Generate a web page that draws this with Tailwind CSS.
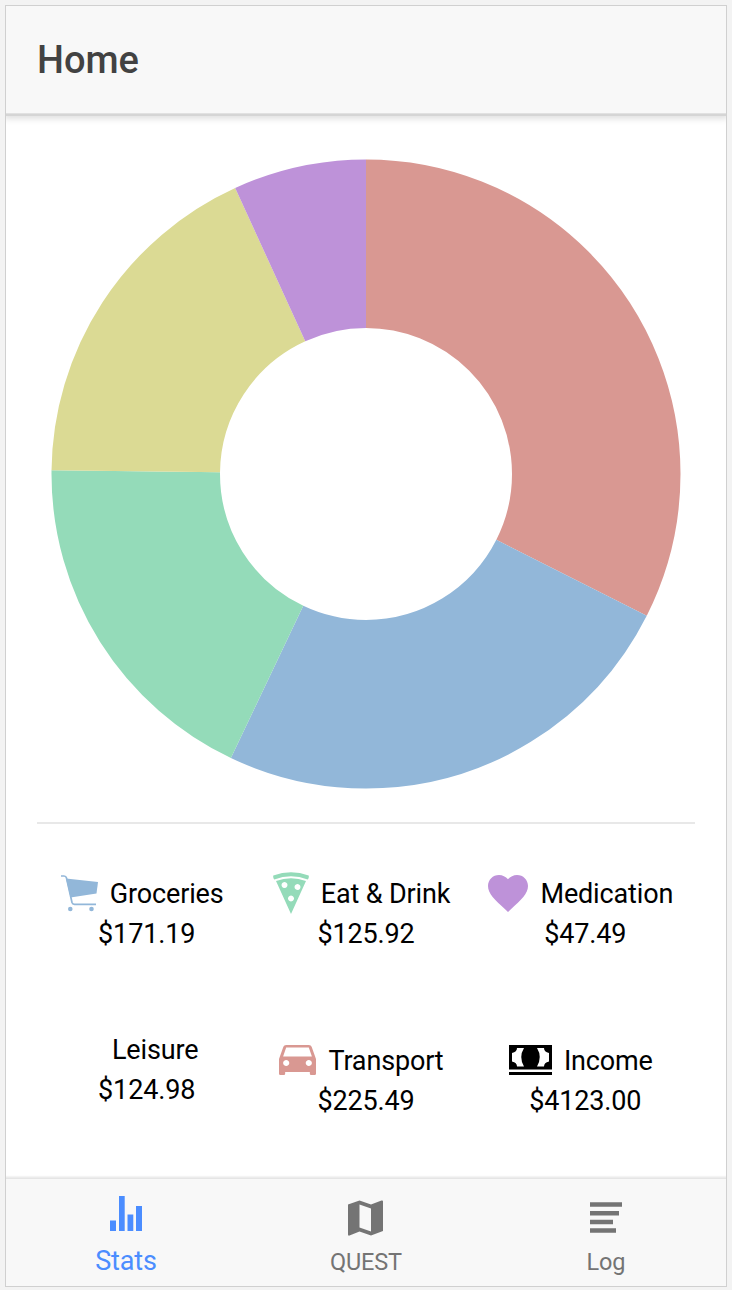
<!DOCTYPE html>
<html lang="en">
<head>
<meta charset="utf-8">
<title>Home</title>
<script src="https://cdn.jsdelivr.net/npm/@tailwindcss/browser@4"></script>
</head>
<body class="w-[732px] h-[1290px] bg-[#f3f3f3] p-[5px] overflow-hidden font-['Roboto',sans-serif]">
<div class="w-[722px] h-[1282px] border border-[#d0d0d0] bg-white flex flex-col text-black text-[27px] tracking-[-0.15px] leading-[40px]">
  <header class="relative z-10 h-[107px] shrink-0 bg-[#f8f8f8] flex items-center pl-[31px] shadow-[0_1px_0_#e1e1e1,0_3px_0_#d5d5d5,0_4px_6px_2px_rgba(0,0,0,0.12)] [clip-path:inset(0_0_-14px_0)]">
    <h1 class="text-[38px] font-medium text-[#424242] leading-none tracking-normal">Home</h1>
  </header>
  <main class="h-[1065px] shrink-0 px-[31px] pt-[46px]">
    <svg class="block ml-[14px]" width="630" height="630" viewBox="-315 -315 630 630">
      <g fill="none" stroke-width="168.5" transform="rotate(-90)">
        <circle r="230.25" pathLength="695.07" stroke="#d99892" stroke-dasharray="225.49 695.07"/>
        <circle r="230.25" pathLength="695.07" stroke="#92b7d9" stroke-dasharray="171.19 695.07" stroke-dashoffset="-225.49"/>
        <circle r="230.25" pathLength="695.07" stroke="#94dbb9" stroke-dasharray="125.92 695.07" stroke-dashoffset="-396.68"/>
        <circle r="230.25" pathLength="695.07" stroke="#dbda94" stroke-dasharray="124.98 695.07" stroke-dashoffset="-522.6"/>
        <circle r="230.25" pathLength="695.07" stroke="#be92d9" stroke-dasharray="47.49 900" stroke-dashoffset="-647.58"/>
      </g>
    </svg>
    <div class="h-[2px] mt-[33px] w-[658px] bg-[#e8e8e8]"></div>
    <div class="grid grid-cols-3 w-[658px] mt-[50px] text-center">
      <div class="h-[167px]">
        <div class="h-10 flex items-center justify-center pr-[9px]">
          <svg class="mr-[12px] mb-[2px] shrink-0" width="37" height="37" viewBox="0 0 37 37"><path d="M0 1H3Q5 1 5.500 3L11 27.500Q11.500 29.300 13.500 29.300H35" fill="none" stroke="#92b7d9" stroke-width="1.700"/><path d="M5 3.500L37 7L35.500 18.500L9.500 22.500Z" fill="#92b7d9"/><circle cx="9.300" cy="34" r="2.300" fill="#92b7d9"/><circle cx="30.500" cy="34" r="2.300" fill="#92b7d9"/></svg>
          <span>Groceries</span>
        </div>
        <div>$171.19</div>
      </div>
      <div class="h-[167px]">
        <div class="h-10 flex items-center justify-center pr-[9px]">
          <svg class="mr-[12px] mb-[2px] shrink-0" width="36" height="42" viewBox="0 0 36 42" fill="#94dbb9"><path d="M.3 3.500Q18-3.200 35.700 3.500Q36.300 6 34.700 7.500Q18 .8 1.300 7.500Q-.2 6 .3 3.500Z"/><path fill-rule="evenodd" d="M3 9Q18 3.500 33 9L18 42ZM11.500 10a3 3 0 1 0 .01 0ZM24.500 12a3 3 0 1 0 .01 0ZM18 23.500a3 3 0 1 0 .01 0Z"/></svg>
          <span>Eat &amp; Drink</span>
        </div>
        <div>$125.92</div>
      </div>
      <div class="h-[167px]">
        <div class="h-10 flex items-center justify-center pr-[9px]">
          <svg class="mr-[12px] mb-[2px] shrink-0" width="40" height="37" viewBox="2 3 20 18.350" preserveAspectRatio="none" fill="#be92d9"><path d="M12 21.350l-1.450-1.320C5.400 15.360 2 12.280 2 8.500 2 5.420 4.420 3 7.500 3c1.740 0 3.410.81 4.500 2.090C13.090 3.810 14.760 3 16.500 3 19.580 3 22 5.420 22 8.500c0 3.780-3.400 6.860-8.550 11.540L12 21.350z"/></svg>
          <span>Medication</span>
        </div>
        <div>$47.49</div>
      </div>
      <div class="-mt-[11px]">
        <div class="pl-[17px]">Leisure</div>
        <div>$124.98</div>
      </div>
      <div>
        <div class="h-10 flex items-center justify-center pr-[9px]">
          <svg class="mr-[12px] mb-[2px] shrink-0" width="37" height="30" viewBox="3 5 18 15" preserveAspectRatio="none" fill="#d99892"><path d="M18.920 6.010C18.720 5.420 18.160 5 17.500 5h-11c-.66 0-1.210.42-1.420 1.010L3 12v7.200c0 .45.35.8.8.8h1.400c.45 0 .8-.35.8-.8v-.7h12v.7c0 .45.350.8.8.8h1.400c.45 0 .8-.350.8-.8V12l-2.080-5.990zM6.500 15.500c-.83 0-1.500-.67-1.500-1.500s.67-1.500 1.500-1.500S8 13.170 8 14s-.67 1.500-1.500 1.500zm11 0c-.83 0-1.500-.67-1.500-1.500s.67-1.500 1.500-1.500 1.500.67 1.500 1.500-.67 1.500-1.500 1.500zM5 10.800l1.500-4.500h11l1.500 4.500H5z"/></svg>
          <span>Transport</span>
        </div>
        <div>$225.49</div>
      </div>
      <div>
        <div class="h-10 flex items-center justify-center pr-[9px]">
          <svg class="mr-[12px] mb-[3px] shrink-0" width="43" height="30" viewBox="0 0 43 30"><path d="M0 0H43V24.500H0ZM0 27H43V30H0Z"/><path fill="#fff" d="M8 3H15Q9.500 12 15 21.500H8Q8 17.500 3 16.500V8Q8 7 8 3ZM35 3H28Q33.500 12 28 21.500H35Q35 17.500 40 16.500V8Q35 7 35 3Z"/></svg>
          <span>Income</span>
        </div>
        <div>$4123.00</div>
      </div>
    </div>
  </main>
  <nav class="relative h-[108px] shrink-0 bg-[#f8f8f8] grid grid-cols-3 text-[#747474] text-[23.5px] leading-[30px] shadow-[0_-1px_0_#ececec,0_-2px_1px_#f4f4f4] border-t border-[#e5e5e5] [clip-path:inset(-5px_0_0_0)]">
    <div class="flex flex-col items-center text-[#4b8dff] text-[27px]">
      <svg class="mt-[17px]" width="32" height="35" viewBox="0 0 32 35" fill="#4b8dff"><path d="M0 24.500H6V35H0ZM9 0H14.700V35H9ZM17.500 18.500H23.300V35H17.500ZM26 10H32V35H26Z"/></svg>
      <span class="mt-[15px]">Stats</span>
    </div>
    <div class="flex flex-col items-center">
      <svg class="mt-[21px] mr-px" width="35" height="36" viewBox="0 0 35 36" fill="#747474"><path fill-rule="evenodd" d="M0 4.500L11.500.5L23 4.500L33.500.5Q35 0 35 1.500V31L23 35.500L11.500 31.500L1.500 35.500Q0 36 0 34.500ZM11.500 4.500V27.500L23 31.500V8.500Z"/></svg>
      <span class="mt-[11px]">QUEST</span>
    </div>
    <div class="flex flex-col items-center">
      <svg class="mt-[23px]" width="32" height="31" viewBox="0 0 32 31" fill="#747474"><path d="M0 .3H32V4.800H0ZM0 9H29V13.500H0ZM0 17.700H23V22.200H0ZM0 26.300H26V30.800H0Z"/></svg>
      <span class="mt-[14px]">Log</span>
    </div>
  </nav>
</div>
</body>
</html>
